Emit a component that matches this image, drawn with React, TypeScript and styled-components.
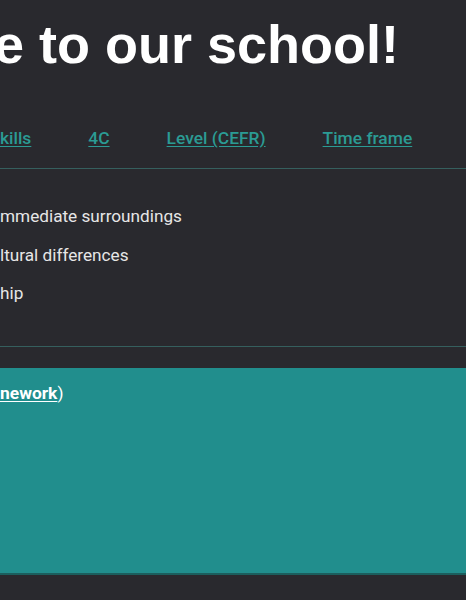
import * as React from "react";
import styled, { createGlobalStyle } from "styled-components";

const GlobalStyle = createGlobalStyle`
  html, body {
    margin: 0;
    padding: 0;
    background: #29292e;
    overflow: hidden;
  }
  body {
    font-family: Roboto, "Noto Sans", Arial, sans-serif;
    color: #e6e6e6;
  }
`;

const Page = styled.div`
  display: flex;
  flex-direction: column;
  width: 466px;
  min-height: 600px;
`;

const Title = styled.h1`
  margin: 12px 0 50px -6px;
  font-family: "Liberation Sans", Arial, sans-serif;
  font-weight: 700;
  font-size: 54px;
  line-height: 64px;
  color: #ffffff;
  white-space: nowrap;
`;

const Tabs = styled.nav`
  display: flex;
  gap: 57px;
  padding-bottom: 18px;
  border-bottom: 1px solid #355f5e;
`;

const TabLink = styled.a`
  font-size: 17.4px;
  line-height: 24px;
  font-weight: 500;
  color: #2b9b94;
  text-decoration: underline;
  text-underline-offset: 2px;
  white-space: nowrap;
`;

const TopicList = styled.ul`
  list-style: none;
  margin: 0;
  padding: 28px 0 33px;
  border-bottom: 1px solid #355f5e;
`;

const Topic = styled.li`
  font-size: 17.2px;
  line-height: 38.5px;
  color: #e6e6e6;
  white-space: nowrap;
`;

const Banner = styled.section`
  margin-top: 21px;
  height: 192px;
  padding-top: 13px;
  background: #218e8d;
  border-bottom: 2px solid #1b5e5d;
`;

const BannerText = styled.p`
  margin: 0;
  font-size: 17.4px;
  line-height: 24px;
  color: #ffffff;
`;

const BannerLink = styled.a`
  font-weight: 700;
  color: #ffffff;
  text-decoration: underline;
  text-underline-offset: 2px;
`;

const tabs = ["kills", "4C", "Level (CEFR)", "Time frame"];
const topics = ["mmediate surroundings", "ltural differences", "hip"];

export default function App() {
  return (
    <>
      <GlobalStyle />
      <Page>
        <Title>e to our school!</Title>
        <Tabs>
          {tabs.map((t) => (
            <TabLink key={t} href="#">
              {t}
            </TabLink>
          ))}
        </Tabs>
        <TopicList>
          {topics.map((t) => (
            <Topic key={t}>{t}</Topic>
          ))}
        </TopicList>
        <Banner>
          <BannerText>
            <BannerLink href="#">nework</BannerLink>)
          </BannerText>
        </Banner>
      </Page>
    </>
  );
}
